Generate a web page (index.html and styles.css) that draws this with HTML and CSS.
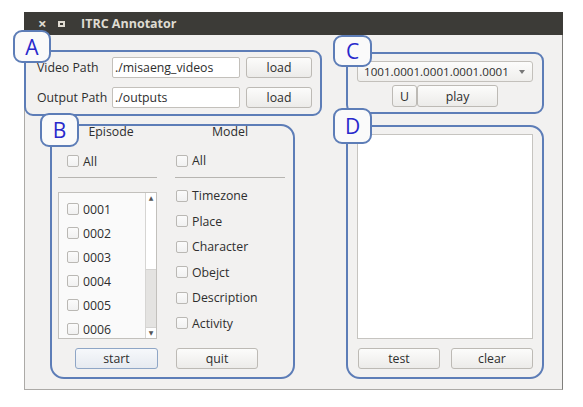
FILE: index.html
```html
<!DOCTYPE html>
<html>
<head>
<meta charset="utf-8">
<link rel="stylesheet" href="styles.css">
</head>
<body>
<div class="window">
  <div class="titlebar">
    <span class="tb-close">×</span>
    <span class="tb-max"></span>
    <span class="tb-title">ITRC Annotator</span>
  </div>
  <div class="client">
    <div class="left">
      <div class="paths">
        <span class="lbl">Video Path</span>
        <div class="field">./misaeng_videos</div>
        <button class="btn">load</button>
        <span class="lbl">Output Path</span>
        <div class="field">./outputs</div>
        <button class="btn">load</button>
      </div>
      <div class="selectors">
        <div class="ep">
          <div class="col-head">Episode</div>
          <div class="check-row all-ep"><span class="cb"></span>All</div>
          <div class="sep"></div>
          <div class="list">
            <div class="items">
              <div class="item"><span class="cb"></span>0001</div>
              <div class="item"><span class="cb"></span>0002</div>
              <div class="item"><span class="cb"></span>0003</div>
              <div class="item"><span class="cb"></span>0004</div>
              <div class="item"><span class="cb"></span>0005</div>
              <div class="item"><span class="cb"></span>0006</div>
            </div>
            <div class="scrollbar">
              <div class="sb-arrow">▲</div>
              <div class="sb-track"></div>
              <div class="sb-thumb"></div>
              <div class="sb-arrow">▼</div>
            </div>
          </div>
        </div>
        <div class="model">
          <div class="col-head">Model</div>
          <div class="check-row all-model"><span class="cb"></span>All</div>
          <div class="sep"></div>
          <div class="m-items">
            <div class="m-item"><span class="cb"></span>Timezone</div>
            <div class="m-item"><span class="cb"></span>Place</div>
            <div class="m-item"><span class="cb"></span>Character</div>
            <div class="m-item"><span class="cb"></span>Obejct</div>
            <div class="m-item"><span class="cb"></span>Description</div>
            <div class="m-item"><span class="cb"></span>Activity</div>
          </div>
        </div>
        <div class="btn-row">
          <button class="btn btn-start">start</button>
          <button class="btn btn-quit">quit</button>
        </div>
      </div>
    </div>
    <div class="right">
      <div class="combo"><span class="combo-text">1001.0001.0001.0001.0001</span><span class="combo-arrow"></span></div>
      <div class="ub-row">
        <button class="btn btn-u">U</button>
        <button class="btn btn-play">play</button>
      </div>
      <div class="textarea"></div>
      <div class="tc-row">
        <button class="btn btn-tc">test</button>
        <button class="btn btn-tc">clear</button>
      </div>
    </div>
  </div>
</div>

<div class="ann ann-a"></div>
<div class="ann ann-b"></div>
<div class="ann ann-c"></div>
<div class="ann ann-d"></div>
<div class="tag tag-a">A</div>
<div class="tag tag-b">B</div>
<div class="tag tag-c">C</div>
<div class="tag tag-d">D</div>
</body>
</html>
```

FILE: styles.css
```css
html, body {
  margin: 0;
  padding: 0;
}
body {
  width: 583px;
  height: 407px;
  background: #ffffff;
  position: relative;
  overflow: hidden;
  font-family: "Open Sans", "DejaVu Sans", sans-serif;
  font-size: 12.3px;
  color: #2e2e2e;
}

.window {
  margin: 12px 0 0 24px;
  width: 539px;
}

.titlebar {
  height: 23px;
  background: #3c3b37;
  display: flex;
  align-items: center;
  color: #dfdbd2;
  font-weight: bold;
  font-size: 12.5px;
}
.tb-close {
  margin-left: 14px;
  width: 10px;
  font-size: 15px;
  line-height: 15px;
}
.tb-max {
  margin-left: 10px;
  width: 7px;
  height: 6px;
  box-sizing: border-box;
  border: 2px solid #dfdbd2;
}
.tb-title {
  margin-left: 16px;
}

.client {
  height: 355px;
  box-sizing: border-box;
  background: #f2f1f0;
  border: 1px solid #acaaa7;
  border-top: 0;
  border-right-color: #7f7e7b;
  display: grid;
  grid-template-columns: 322px 1fr;
}

/* Paths */
.paths {
  margin: 22px 0 0 12px;
  display: grid;
  grid-template-columns: 69px 128px 66px;
  column-gap: 6px;
  row-gap: 9px;
  grid-auto-rows: 21px;
  align-items: center;
}
.lbl {
  white-space: nowrap;
}
.field {
  height: 21px;
  box-sizing: border-box;
  background: #ffffff;
  border: 1px solid #c3c0bb;
  border-radius: 2px;
  padding: 0 2px;
  line-height: 19px;
  white-space: nowrap;
  overflow: hidden;
}
.btn {
  height: 21px;
  box-sizing: border-box;
  border: 1px solid #bdbab5;
  border-radius: 3px;
  background: linear-gradient(#fcfcfb, #ecebe9);
  font: inherit;
  color: #2e2e2e;
  padding: 0;
  line-height: 19px;
  text-align: center;
}

/* Selectors */
.selectors {
  margin: 16px 0 0 33px;
  display: grid;
  grid-template-columns: 99px 110px;
  column-gap: 18px;
}
.col-head {
  height: 16px;
  line-height: 16px;
  text-align: center;
}
.ep .col-head {
  padding-left: 7px;
}
.check-row {
  display: flex;
  align-items: center;
  height: 20px;
  margin-top: 11px;
}
.all-ep {
  padding-left: 9px;
}
.all-model {
  padding-left: 1px;
  margin-top: 10px;
  height: 21px;
}
.cb {
  width: 12px;
  height: 12px;
  box-sizing: border-box;
  border: 1px solid #bab8b4;
  border-radius: 2px;
  background: linear-gradient(#fbfbfb, #f1f1f1);
  margin-right: 4px;
  flex: none;
}
.sep {
  height: 1px;
  background: #b7b5b1;
  margin-top: 6px;
}

.list {
  margin-top: 14px;
  height: 147px;
  box-sizing: border-box;
  border: 1px solid #c2c0bc;
  background: #fafafa;
  display: flex;
  overflow: hidden;
}
.items {
  flex: 1;
  padding-top: 4px;
  overflow: hidden;
}
.item {
  height: 24px;
  padding-left: 8px;
  display: flex;
  align-items: center;
}
.scrollbar {
  width: 11px;
  box-sizing: border-box;
  border-left: 1px solid #d6d5d3;
  display: flex;
  flex-direction: column;
  background: #ffffff;
}
.sb-arrow {
  height: 10px;
  font-size: 6px;
  line-height: 10px;
  text-align: center;
  color: #555;
}
.sb-track {
  height: 67px;
}
.sb-thumb {
  height: 58px;
  background: #e4e3e1;
  border-top: 1px solid #d4d3d1;
  border-bottom: 1px solid #d4d3d1;
}

.m-items {
  margin-top: 5px;
}
.m-item {
  height: 25.5px;
  padding-left: 1px;
  display: flex;
  align-items: center;
}

.btn-row {
  grid-column: 1 / -1;
  margin-top: 9px;
  display: flex;
}
.btn-start {
  margin-left: 17px;
  width: 83px;
  border-color: #8fa6c6;
  background: linear-gradient(#f6f8fb, #e6eaf0);
}
.btn-quit {
  margin-left: 18px;
  width: 82px;
}

/* Right column */
.right {
  padding-left: 10px;
  width: 176px;
}
.combo {
  margin-top: 26px;
  height: 21px;
  box-sizing: border-box;
  border: 1px solid #c3c0bb;
  border-radius: 3px;
  background: linear-gradient(#fcfcfb, #efeeec);
  display: flex;
  align-items: center;
  padding-left: 6px;
}
.combo-text {
  flex: 1;
  white-space: nowrap;
  font-size: 11.6px;
}
.combo-arrow {
  width: 0;
  height: 0;
  border-left: 3px solid transparent;
  border-right: 3px solid transparent;
  border-top: 4px solid #777;
  margin-right: 7px;
}
.ub-row {
  margin-top: 3px;
  display: flex;
  justify-content: center;
}
.btn-u {
  width: 25px;
  height: 22px;
}
.btn-play {
  width: 81px;
  height: 22px;
}
.textarea {
  margin-top: 27px;
  height: 205px;
  box-sizing: border-box;
  background: #ffffff;
  border: 1px solid #c6c4c0;
}
.tc-row {
  margin-top: 9px;
  display: flex;
  justify-content: space-between;
  padding-left: 1px;
}
.btn-tc {
  width: 82px;
}

/* Annotation overlays */
.ann {
  position: absolute;
  box-sizing: border-box;
  border: 2px solid #5d7db7;
  border-radius: 9px;
}
.ann-a { left: 24px; top: 50px; width: 298px; height: 66px; }
.ann-b { left: 50px; top: 124px; width: 245px; height: 255px; border-radius: 14px; }
.ann-c { left: 346px; top: 52px; width: 198px; height: 62px; }
.ann-d { left: 346px; top: 125px; width: 198px; height: 254px; border-radius: 14px; }

.tag {
  position: absolute;
  box-sizing: border-box;
  background: #fafafa;
  border: 2px solid #5d7db7;
  border-radius: 9px;
  color: #2929cc;
  font-family: "Open Sans", "DejaVu Sans", sans-serif;
  font-size: 21px;
  display: flex;
  align-items: center;
  justify-content: center;
}
.tag-a { left: 13px; top: 30px; width: 38px; height: 33px; }
.tag-b { left: 40px; top: 113px; width: 39px; height: 34px; }
.tag-c { left: 333px; top: 35px; width: 39px; height: 32px; }
.tag-d { left: 333px; top: 108px; width: 39px; height: 36px; }
```
